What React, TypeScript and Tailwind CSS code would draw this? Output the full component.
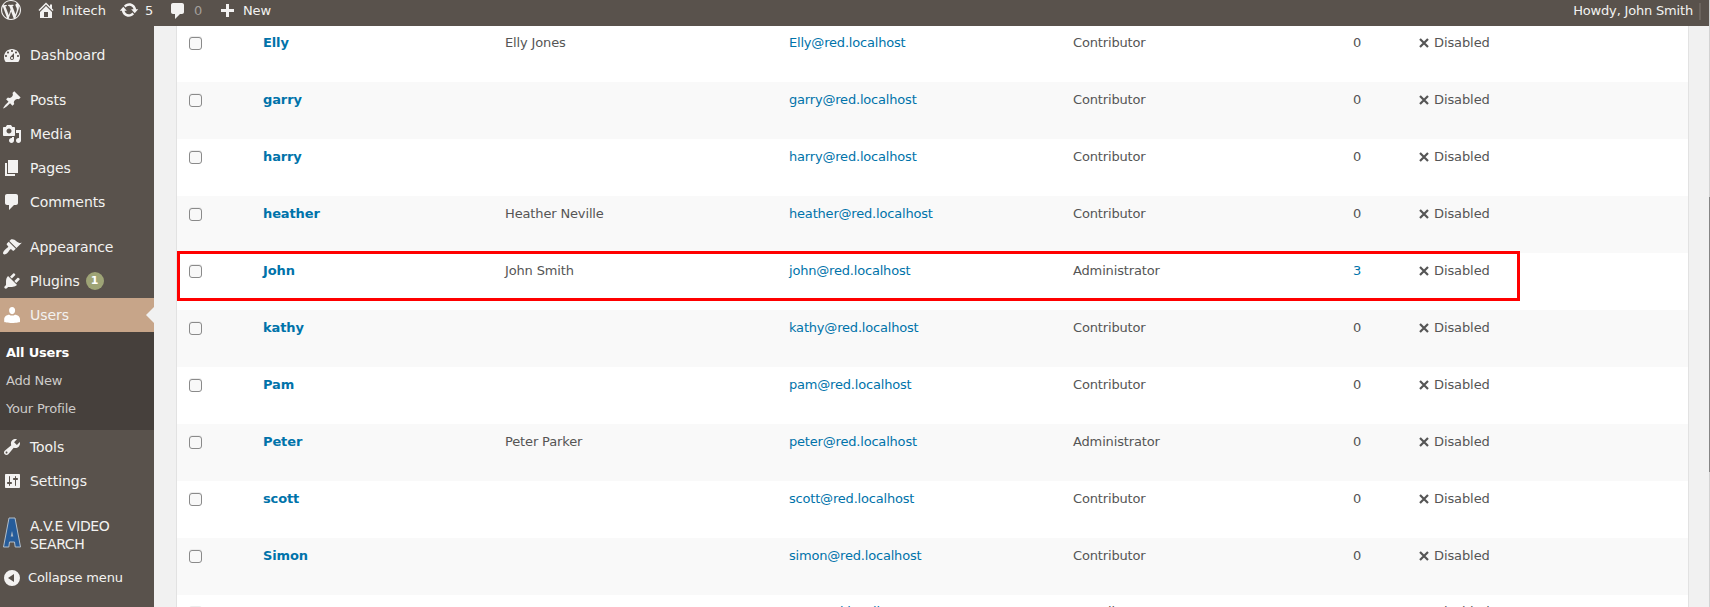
import React from "react";

const paths = {
  wordpress:
    "M20 10c0-5.51-4.49-10-10-10C4.48 0 0 4.49 0 10c0 5.52 4.48 10 10 10 5.51 0 10-4.48 10-10zM7.78 15.37L4.37 6.22c.55-.02 1.17-.08 1.17-.08.5-.06.44-1.13-.06-1.11 0 0-1.45.11-2.37.11-.18 0-.37 0-.58-.01C4.12 2.69 6.87 1.11 10 1.11c2.33 0 4.45.87 6.05 2.34-.68-.11-1.65.39-1.65 1.58 0 .74.45 1.36.9 2.1.35.61.55 1.36.55 2.46 0 1.49-1.4 5-1.4 5l-3.03-8.37c.54-.02.82-.17.82-.17.5-.05.44-1.25-.06-1.22 0 0-1.44.12-2.38.12-.87 0-2.33-.12-2.33-.12-.5-.03-.56 1.2-.06 1.22l.92.08 1.26 3.41zM17.41 10c.24-.64.74-1.87.43-4.25.7 1.29 1.05 2.71 1.05 4.25 0 3.29-1.73 6.24-4.4 7.78.97-2.59 1.94-5.2 2.92-7.78zM6.1 18.09C3.12 16.65 1.11 13.53 1.11 10c0-1.3.23-2.48.72-3.59C3.25 10.3 4.67 14.2 6.1 18.09zm4.03-6.63l2.58 6.98c-.86.29-1.76.45-2.71.45-.79 0-1.57-.11-2.29-.33.81-2.38 1.62-4.74 2.42-7.1z",
  home: "M16 8.5l1.53 1.53-1.06 1.06L10 4.6l-6.47 6.49-1.06-1.06L10 2.5l4 4v-2h2v4zm-6-2.46l6 5.99V18H4v-5.97zM12 17v-5H8v5h4z",
  update:
    "M10.2 3.28c3.53 0 6.43 2.61 6.92 6h2.08l-3.5 4-3.5-4h2.32c-.45-1.97-2.21-3.45-4.32-3.45-1.45 0-2.73.71-3.54 1.78L4.95 5.66C6.23 4.2 8.11 3.28 10.2 3.28zm-.4 13.44c-3.52 0-6.43-2.61-6.92-6H.8l3.5-4c1.17 1.33 2.33 2.67 3.5 4H5.48c.45 1.97 2.21 3.45 4.32 3.45 1.45 0 2.73-.71 3.54-1.78l1.71 1.95c-1.28 1.46-3.15 2.38-5.25 2.38z",
  plus: "M17 9v3h-5v5H9v-5H4V9h5V4h3v5z",
  dashboard:
    "M3.76 17h12.48c1.1-1.37 1.76-3.11 1.76-5 0-4.42-3.58-8-8-8s-8 3.58-8 8c0 1.89.66 3.63 1.76 5zM10 5c.55 0 1 .45 1 1s-.45 1-1 1-1-.45-1-1 .45-1 1-1zM6 6.5c.55 0 1 .45 1 1s-.45 1-1 1-1-.45-1-1 .45-1 1-1zm8 0c.55 0 1 .45 1 1s-.45 1-1 1-1-.45-1-1 .45-1 1-1zm-5.37 5.05L12 8v5c0 1.1-.9 2-2 2s-2-.9-2-2c0-.57.24-1.08.63-1.45zM4 10c.55 0 1 .45 1 1s-.45 1-1 1-1-.45-1-1 .45-1 1-1zm12 0c.55 0 1 .45 1 1s-.45 1-1 1-1-.45-1-1 .45-1 1-1zm-5 3c0-.55-.45-1-1-1s-1 .45-1 1 .45 1 1 1 1-.45 1-1z",
  posts:
    "M10.44 3.02l1.82-1.82 6.36 6.35-1.83 1.82c-1.05-.68-2.48-.57-3.41.36l-.75.75c-.92.93-1.04 2.35-.35 3.41l-1.83 1.82-2.41-2.41-2.8 2.79c-.42.42-3.38 2.71-3.8 2.29s1.86-3.39 2.28-3.81l2.79-2.79L4.1 9.36l1.83-1.82c1.05.69 2.48.57 3.4-.36l.75-.75c.93-.92 1.05-2.35.36-3.41z",
  media:
    "M13 11V4c0-.55-.45-1-1-1h-1.67L9 1H5L3.67 3H2c-.55 0-1 .45-1 1v7c0 .55.45 1 1 1h10c.55 0 1-.45 1-1zM7 4.5c1.38 0 2.5 1.12 2.5 2.5S8.38 9.5 7 9.5 4.5 8.38 4.5 7 5.62 4.5 7 4.5zM14 6h5v10.5c0 1.38-1.12 2.5-2.5 2.5S14 17.88 14 16.5s1.12-2.5 2.5-2.5c.17 0 .34.02.5.05V9h-3V6zm-4 8.05V13h2v3.5c0 1.38-1.12 2.5-2.5 2.5S7 17.88 7 16.5 8.12 14 9.5 14c.17 0 .34.02.5.05z",
  pages: "M6 15V2h10v13H6zm-1 1h8v2H3V5h2v11z",
  comments:
    "M5 2h9c1.1 0 2 .9 2 2v7c0 1.1-.9 2-2 2h-2l-5 5v-5H5c-1.1 0-2-.9-2-2V4c0-1.1.9-2 2-2z",
  appearance:
    "M14.48 11.06L7.41 3.99l1.5-1.5c.5-.56 2.3-.47 3.51.32 1.21.8 1.43 1.28 2.91 2.1 1.18.64 2.45 1.26 4.45.85zm-.71.71L6.7 4.7 4.93 6.47c-.39.39-.39 1.02 0 1.41l1.06 1.06c.39.39.39 1.03 0 1.42-.6.6-1.43 1.11-2.21 1.69-.35.26-.7.53-1.01.84C1.43 14.23.4 16.08 1.4 17.07c.99 1 2.84-.03 4.18-1.36.31-.31.58-.66.85-1.02.57-.78 1.08-1.61 1.69-2.21.39-.39 1.02-.39 1.41 0l1.06 1.06c.39.39 1.02.39 1.41 0z",
  plugins:
    "M13.11 4.36L9.87 7.6 8 5.73l3.24-3.24c.35-.34 1.05-.2 1.56.32.52.51.66 1.21.31 1.55zm-8 1.77l.91-1.12 9.01 9.01-1.19.84c-.71.71-2.63 1.16-3.82 1.16H6.14L4.9 17.26c-.59.59-1.54.59-2.12 0-.59-.58-.59-1.53 0-2.12l1.24-1.24v-3.88c0-1.13.4-3.19 1.09-3.89zm7.26 3.97l3.24-3.24c.34-.35 1.04-.21 1.55.31.52.51.66 1.21.31 1.55l-3.24 3.25z",
  users:
    "M10.1 9.2c-2 0-3-1.9-3-3.9C7.1 3.3 8.2 2 10.1 2s3 1.3 3 3.3c0 2-1 3.9-3 3.9zM7.3 9.7c.8.6 1.7.9 2.8.9s2-.3 2.8-.9c2.9.1 5.1 2 5.1 4.4v2.6c0 .5-3.6 1.2-7.9 1.2s-7.9-.7-7.9-1.2v-2.6c0-2.4 2.2-4.3 5.1-4.4z",
  tools:
    "M16.68 9.77c-1.34 1.34-3.3 1.67-4.95.99l-5.41 6.52c-.99.99-2.59.99-3.58 0s-.99-2.59 0-3.57l6.52-5.42c-.68-1.65-.35-3.61.99-4.95 1.28-1.28 3.12-1.62 4.72-1.06l-2.89 2.89 2.82 2.82 2.86-2.87c.53 1.58.18 3.39-1.08 4.65zM3.81 16.21c.4.39 1.04.39 1.43 0 .4-.4.4-1.04 0-1.43-.39-.4-1.03-.4-1.43 0-.39.39-.39 1.03 0 1.43z",
  settings:
    "M18 16V4c0-.55-.45-1-1-1H4c-.55 0-1 .45-1 1v12c0 .55.45 1 1 1h13c.55 0 1-.45 1-1zM8 11h1c.55 0 1 .45 1 1s-.45 1-1 1H8v1.5c0 .28-.22.5-.5.5s-.5-.22-.5-.5V13H6c-.55 0-1-.45-1-1s.45-1 1-1h1V5.5c0-.28.22-.5.5-.5s.5.22.5.5V11zm5-2h-1c-.55 0-1-.45-1-1s.45-1 1-1h1V5.5c0-.28.22-.5.5-.5s.5.22.5.5V7h1c.55 0 1 .45 1 1s-.45 1-1 1h-1v5.5c0 .28-.22.5-.5.5s-.5-.22-.5-.5V9z",
  collapse: "M10 2a8 8 0 1 0 0 16 8 8 0 0 0 0-16zM12 6v8l-6-4z",
};

type IconName = keyof typeof paths;

function Icon({ name, className = "fill-[#f3f2f1]" }: { name: IconName; className?: string }) {
  return (
    <svg viewBox="0 0 20 20" fillRule="evenodd" className={`size-5 shrink-0 ${className}`}>
      <path d={paths[name]} />
    </svg>
  );
}

function AdminBar() {
  return (
    <header className="flex h-[26px] shrink-0 bg-[#59524c] pr-[8px] text-[13px] leading-[21px] text-[#f3f2f1]">
      <Icon name="wordpress" className="ml-px fill-[#f3f2f1]" />
      <div className="ml-[15px] flex w-[80px]">
        <Icon name="home" />
        <span className="ml-[6px] tracking-[-0.05px]">Initech</span>
      </div>
      <div className="ml-[3px] flex w-[48px]">
        <Icon name="update" />
        <span className="ml-[6px]">5</span>
      </div>
      <div className="ml-px flex w-[49px]">
        <Icon name="comments" className="mt-px fill-[#f3f2f1]" />
        <span className="ml-[6px] text-[#a39f9b]">0</span>
      </div>
      <div className="flex">
        <Icon name="plus" />
        <span className="ml-[6px] tracking-[-0.1px]">New</span>
      </div>
      <div className="ml-auto flex">
        <span className="tracking-[-0.18px]">Howdy, John Smith</span>
        <span className="mt-[3px] ml-[6px] h-[17px] w-[2px] bg-[#6b645e]" />
      </div>
    </header>
  );
}

function MenuItem({ icon, label, badge, active }: { icon: IconName; label: string; badge?: string; active?: boolean }) {
  return (
    <li className={`relative flex h-[34px] items-center pl-[2px] ${active ? "bg-[#c7a589]" : ""}`}>
      <Icon name={icon} className={active ? "fill-white" : "fill-[#f3f2f1]"} />
      <span className="ml-2 tracking-[-0.07px]">{label}</span>
      {badge && (
        <span className="ml-[6px] flex size-[18px] items-center justify-center rounded-full bg-[#9ea476] text-[11px] font-bold text-white">
          {badge}
        </span>
      )}
      {active && (
        <svg viewBox="0 0 8 16" className="absolute top-[9px] right-0 h-4 w-2 fill-[#f1f1f1]">
          <path d="M8 0v16L0 8z" />
        </svg>
      )}
    </li>
  );
}

function Sidebar() {
  return (
    <nav className="w-[154px] shrink-0 bg-[#59524c] pt-3 text-[14px] leading-[18px] text-[#f3f2f1]">
      <ul>
        <MenuItem icon="dashboard" label="Dashboard" />
      </ul>
      <ul className="mt-[11px]">
        <MenuItem icon="posts" label="Posts" />
        <MenuItem icon="media" label="Media" />
        <MenuItem icon="pages" label="Pages" />
        <MenuItem icon="comments" label="Comments" />
      </ul>
      <ul className="mt-[11px]">
        <MenuItem icon="appearance" label="Appearance" />
        <MenuItem icon="plugins" label="Plugins" badge="1" />
        <MenuItem icon="users" label="Users" active />
      </ul>
      <ul className="flex h-[98px] flex-col bg-[#46403c] pt-[7px] pl-[6px] text-[13px] leading-[28px] tracking-[-0.2px] text-[#cdcbc9]">
        <li className="font-bold text-white">All Users</li>
        <li>Add New</li>
        <li>Your Profile</li>
      </ul>
      <ul>
        <MenuItem icon="tools" label="Tools" />
        <MenuItem icon="settings" label="Settings" />
      </ul>
      <div className="mt-[11px] flex h-[52px] items-start pt-2 pl-[3px]">
        <svg viewBox="0 0 18 31" className="h-[31px] w-[18px] shrink-0">
          <path
            d="M6 1h6l5.5 29h-5.3l-.7-5h-5l-.7 5H.5z"
            fill="#265c9a"
            stroke="#b4bfca"
            strokeWidth="1"
          />
          <path d="M9 14l-1.3 5.5h2.6z" fill="#a9b5c2" />
        </svg>
        <span className="ml-[9px] w-[100px] tracking-[-0.38px]">A.V.E VIDEO SEARCH</span>
      </div>
      <div className="flex h-[34px] items-center pl-[2px] text-[13px]">
        <Icon name="collapse" />
        <span className="ml-[6px] tracking-[-0.12px]">Collapse menu</span>
      </div>
    </nav>
  );
}

interface User {
  login: string;
  email: string;
  name?: string;
  role?: string;
  posts?: number;
  highlighted?: boolean;
}

const users: User[] = [
  { login: "Elly", email: "Elly@red.localhost", name: "Elly Jones" },
  { login: "garry", email: "garry@red.localhost" },
  { login: "harry", email: "harry@red.localhost" },
  { login: "heather", email: "heather@red.localhost", name: "Heather Neville" },
  {
    login: "John",
    email: "john@red.localhost",
    name: "John Smith",
    role: "Administrator",
    posts: 3,
    highlighted: true,
  },
  { login: "kathy", email: "kathy@red.localhost" },
  { login: "Pam", email: "pam@red.localhost" },
  { login: "Peter", email: "peter@red.localhost", name: "Peter Parker", role: "Administrator" },
  { login: "scott", email: "scott@red.localhost" },
  { login: "Simon", email: "simon@red.localhost" },
  { login: "ron", email: "ron@red.localhost" },
];

function UserRow({ user, index }: { user: User; index: number }) {
  const posts = user.posts ?? 0;
  const first = index === 0;
  const last = index === users.length - 1;
  return (
    <div
      className={`relative grid shrink-0 grid-cols-[86px_242px_284px_284px_250px_1fr] leading-[18px] ${
        first ? "h-[56px]" : "h-[57px]"
      } ${first || last ? "pt-[8px]" : "pt-[9px]"} ${index % 2 ? "bg-[#f9f9f9]" : "bg-white"}`}
    >
      <div className={`pl-3 ${last ? "pt-[4px]" : "pt-[3px]"}`}>
        <div className="size-[13px] rounded-[3px] border border-[#8a8a8a] bg-[#f8f8f8] shadow-[0_-1px_0_#ececec]" />
      </div>
      <a className="font-bold tracking-[-0.12px] text-[#0073aa]">{user.login}</a>
      <span className="tracking-[-0.14px]">{user.name}</span>
      <a className="tracking-[-0.19px] text-[#0073aa]">{user.email}</a>
      <span className="tracking-[-0.15px]">{user.role ?? "Contributor"}</span>
      <div className="flex">
        <span className={`w-[96px] shrink-0 pl-[30px] ${posts ? "text-[#0073aa]" : ""}`}>{posts}</span>
        <svg
          viewBox="0 0 10 10"
          className={`h-[10px] w-[10px] shrink-0 fill-none stroke-[#555] ${last ? "mt-[5px]" : "mt-[4px]"}`}
        >
          <path d="M1 1l8 8M9 1L1 9" strokeWidth="2.2" />
        </svg>
        <span className="ml-[5px] tracking-[-0.1px]">Disabled</span>
      </div>
      {user.highlighted && (
        <div className="pointer-events-none absolute top-[-2px] left-0 z-10 h-[50px] w-[1343px] border-[3px] border-[#ff0000]" />
      )}
    </div>
  );
}

export default function App() {
  return (
    <div className="flex h-[607px] overflow-hidden bg-[#f1f1f1] font-['DejaVu_Sans',sans-serif]">
      <div className="flex w-[1709px] shrink-0 flex-col">
        <AdminBar />
        <div className="flex min-h-0 grow">
          <Sidebar />
          <main className="ml-[22px] h-[700px] w-[1513px] shrink-0 border-x border-[#e2e2e2] bg-white text-[13px] text-[#555]">
            {users.map((user, i) => (
              <UserRow key={user.login} user={user} index={i} />
            ))}
          </main>
        </div>
      </div>
      <div className="w-px bg-[#d3d3d3] pt-[197px]">
        <div className="h-[275px] bg-[#858585]" />
      </div>
    </div>
  );
}
